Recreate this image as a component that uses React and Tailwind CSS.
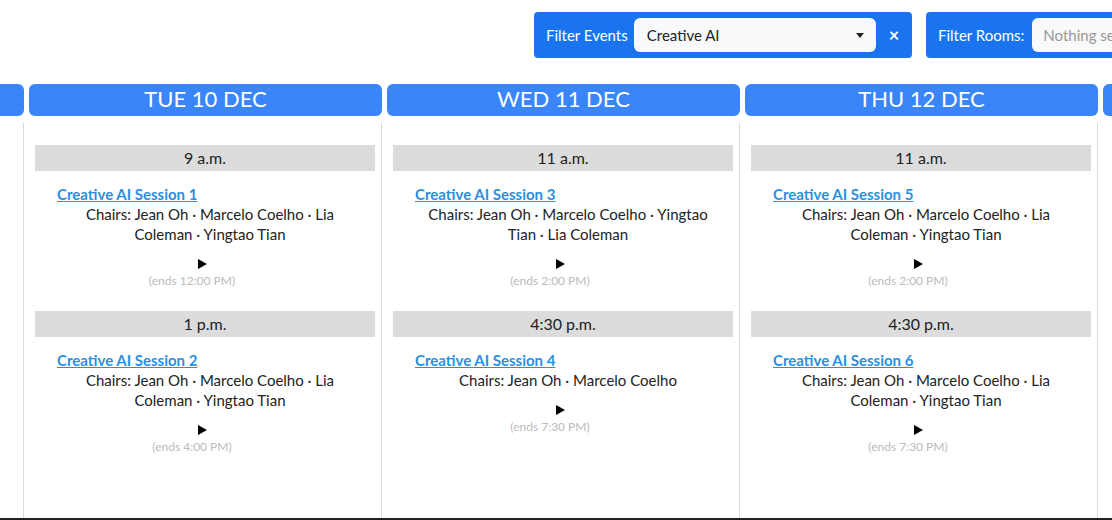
import React from "react";

const fontStack = { fontFamily: "Lato, 'Open Sans', sans-serif" };

const days = [
  { label: "MON 9 DEC", slots: [] },
  {
    label: "TUE 10 DEC",
    slots: [
      {
        time: "9 a.m.",
        title: "Creative AI Session 1",
        chairs: "Jean Oh · Marcelo Coelho · Lia Coleman · Yingtao Tian",
        ends: "12:00 PM",
      },
      {
        time: "1 p.m.",
        title: "Creative AI Session 2",
        chairs: "Jean Oh · Marcelo Coelho · Lia Coleman · Yingtao Tian",
        ends: "4:00 PM",
      },
    ],
  },
  {
    label: "WED 11 DEC",
    slots: [
      {
        time: "11 a.m.",
        title: "Creative AI Session 3",
        chairs: "Jean Oh · Marcelo Coelho · Yingtao Tian · Lia Coleman",
        ends: "2:00 PM",
      },
      {
        time: "4:30 p.m.",
        title: "Creative AI Session 4",
        chairs: "Jean Oh · Marcelo Coelho",
        ends: "7:30 PM",
      },
    ],
  },
  {
    label: "THU 12 DEC",
    slots: [
      {
        time: "11 a.m.",
        title: "Creative AI Session 5",
        chairs: "Jean Oh · Marcelo Coelho · Lia Coleman · Yingtao Tian",
        ends: "2:00 PM",
      },
      {
        time: "4:30 p.m.",
        title: "Creative AI Session 6",
        chairs: "Jean Oh · Marcelo Coelho · Lia Coleman · Yingtao Tian",
        ends: "7:30 PM",
      },
    ],
  },
  { label: "FRI 13 DEC", slots: [] },
];

const Slot = ({ slot }) => (
  <div className="mb-[22px]">
    <div className="h-[26px] bg-[#dcdcdc] flex items-center justify-center text-[16px] text-[#222]">
      {slot.time}
    </div>
    <div className="mt-[13px] ml-[22px] w-[306px]">
      <a
        href="#"
        className="block h-[20px] leading-[20px] text-[15px] font-bold text-[#2b8fdf] underline"
      >
        {slot.title}
      </a>
      <div className="text-center text-[15px] leading-[20px] text-[#222]">
        Chairs: {slot.chairs}
      </div>
      <div className="mt-[11px] h-[18px] flex items-center justify-center pr-[16px]">
        <span className="w-0 h-0 border-l-[9px] border-l-black border-y-[5px] border-y-transparent" />
      </div>
      <div className="h-[16px] leading-[16px] text-center text-[12px] text-[#bbb] pr-[36px]">
        (ends {slot.ends})
      </div>
    </div>
  </div>
);

const DayColumn = ({ day }) => (
  <div className="w-[358px] shrink-0 flex flex-col">
    <div className="ml-[6px] w-[353px] h-[32px] pb-[3px] rounded-md bg-[#3a86f8] text-white text-[22px] flex items-center justify-center">
      {day.label}
    </div>
    <div className="mt-[7px] flex-1 border-l border-[#dadada] pl-[11px] pr-[6px] pt-[22px]">
      {day.slots.map((s) => (
        <Slot key={s.title} slot={s} />
      ))}
    </div>
  </div>
);

export default function App() {
  return (
    <div className="h-[520px] w-[1112px] overflow-hidden bg-white flex flex-col" style={fontStack}>
      <div className="flex gap-[14px] ml-[534px] mt-[12px] h-[46px] shrink-0">
        <div className="w-[378px] shrink-0 rounded bg-[#1a74f0] flex items-center pl-[12px]">
          <span className="text-white text-[15px]">Filter Events</span>
          <div className="ml-[6px] w-[242px] h-[34px] rounded-md bg-[#f8f9fa] flex items-center pl-[13px] pr-[12px] text-[15px] text-[#222]">
            <span className="flex-1">Creative AI</span>
            <span className="w-0 h-0 border-t-[5px] border-t-[#222] border-x-[4px] border-x-transparent" />
          </div>
          <span className="flex-1 text-center text-white text-[18px] font-bold">×</span>
        </div>
        <div className="w-[380px] shrink-0 rounded bg-[#1a74f0] flex items-center pl-[12px]">
          <span className="text-white text-[15px]">Filter Rooms:</span>
          <div className="ml-[8px] w-[242px] h-[34px] rounded-md bg-[#f8f9fa] flex items-center pl-[11px] text-[15px] text-[#999]">
            Nothing selected
          </div>
        </div>
      </div>
      <div className="flex ml-[-335px] mt-[26px] flex-1">
        {days.map((d) => (
          <DayColumn key={d.label} day={d} />
        ))}
      </div>
      <div className="h-[2px] bg-[#222] shrink-0" />
    </div>
  );
}
